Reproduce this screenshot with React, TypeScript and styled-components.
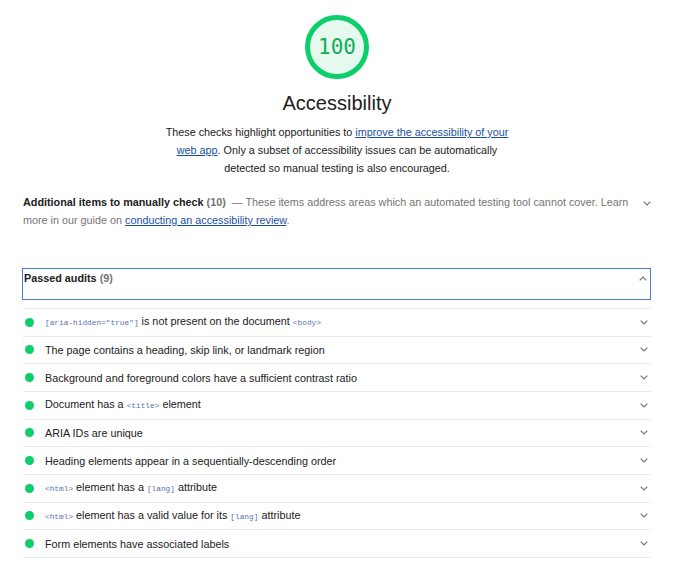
import React from 'react';
import styled, { createGlobalStyle } from 'styled-components';

const GlobalStyle = createGlobalStyle`
  body {
    margin: 0;
    background: #fff;
    font-family: "Liberation Sans", Arial, sans-serif;
    color: #212121;
  }
`;

const Page = styled.div`
  padding: 15px 23px 0;
  font-size: 10.8px;
  line-height: 18px;
`;

const Header = styled.header`
  display: flex;
  flex-direction: column;
  align-items: center;
`;

const Gauge = styled.div`
  width: 64px;
  height: 64px;
  box-sizing: border-box;
  border: 5px solid #0cce6b;
  border-radius: 50%;
  background: #e6f9ef;
  display: flex;
  align-items: center;
  justify-content: center;
  font-family: "DejaVu Sans Mono", "Liberation Mono", monospace;
  font-size: 21px;
  line-height: 1;
  color: #0fae5b;
`;

const Title = styled.h1`
  margin: 12px 0 0;
  font-size: 20px;
  line-height: 24px;
  font-weight: normal;
  color: #212121;
`;

const Description = styled.p`
  margin: 8px 0 0;
  max-width: 350px;
  text-align: center;
`;

const Link = styled.a`
  color: #1a4fa0;
  text-decoration: underline;
`;

const ManualRow = styled.div`
  margin-top: 16px;
  display: flex;
  align-items: flex-start;
  gap: 8px;
`;

const ManualText = styled.div`
  flex: 1;
  color: #757575;
`;

const Strong = styled.span`
  font-weight: bold;
  color: #212121;
`;

const Count = styled.span`
  font-weight: bold;
  color: #757575;
`;

const PassedBox = styled.div`
  margin: 39px 0 0 -1px;
  border: 1px solid #4a7bd0;
  padding: 0 3px 12px 1px;
  display: flex;
  justify-content: space-between;
  align-items: flex-start;
`;

const AuditList = styled.div`
  margin-top: 8px;
  border-top: 1px solid #ebebeb;
`;

const AuditRow = styled.div`
  display: flex;
  align-items: center;
  height: 27.67px;
  box-sizing: border-box;
  border-bottom: 1px solid #ebebeb;
  padding: 0 3px 0 2px;
`;

const Dot = styled.span`
  width: 9px;
  height: 9px;
  border-radius: 50%;
  background: #0cce6b;
  margin-right: 11px;
  flex-shrink: 0;
`;

const AuditTitle = styled.span`
  flex: 1;
`;

const Code = styled.code`
  font-family: "Liberation Mono", "DejaVu Sans Mono", monospace;
  font-size: 7.8px;
  color: #5b6fb5;
`;

const ChevronBox = styled.span<{ $top?: number }>`
  display: flex;
  width: 8px;
  height: 18px;
  align-items: center;
  flex-shrink: 0;
  margin-top: ${(p) => p.$top ?? 0}px;
`;

function Chevron({ up = false, top }: { up?: boolean; top?: number }) {
  return (
    <ChevronBox $top={top}>
      <svg width="8" height="5" viewBox="0 0 8 5">
        <polyline
          points={up ? '0.7,4.3 4,1 7.3,4.3' : '0.7,0.7 4,4 7.3,0.7'}
          fill="none"
          stroke="#757575"
          strokeWidth="1.2"
        />
      </svg>
    </ChevronBox>
  );
}

const audits: React.ReactNode[] = [
  <>
    <Code>[aria-hidden="true"]</Code> is not present on the document <Code>&lt;body&gt;</Code>
  </>,
  <>The page contains a heading, skip link, or landmark region</>,
  <>Background and foreground colors have a sufficient contrast ratio</>,
  <>
    Document has a <Code>&lt;title&gt;</Code> element
  </>,
  <>ARIA IDs are unique</>,
  <>Heading elements appear in a sequentially-descending order</>,
  <>
    <Code>&lt;html&gt;</Code> element has a <Code>[lang]</Code> attribute
  </>,
  <>
    <Code>&lt;html&gt;</Code> element has a valid value for its <Code>[lang]</Code> attribute
  </>,
  <>Form elements have associated labels</>,
];

export default function App() {
  return (
    <>
      <GlobalStyle />
      <Page>
        <Header>
          <Gauge>100</Gauge>
          <Title>Accessibility</Title>
          <Description>
            These checks highlight opportunities to{' '}
            <Link href="#">improve the accessibility of your web app</Link>. Only a subset of
            accessibility issues can be automatically detected so manual testing is also
            encouraged.
          </Description>
        </Header>

        <ManualRow>
          <ManualText>
            <Strong>Additional items to manually check</Strong> <Count>(10)</Count>
            {'\u00a0 '}&mdash; These items address areas which an automated testing tool cannot
            cover. Learn more in our guide on{' '}
            <Link href="#">conducting an accessibility review</Link>.
          </ManualText>
          <Chevron top={1} />
        </ManualRow>

        <PassedBox>
          <span>
            <Strong>Passed audits</Strong> <Count>(9)</Count>
          </span>
          <Chevron up />
        </PassedBox>

        <AuditList>
          {audits.map((content, i) => (
            <AuditRow key={i}>
              <Dot />
              <AuditTitle>{content}</AuditTitle>
              <Chevron />
            </AuditRow>
          ))}
        </AuditList>
      </Page>
    </>
  );
}
